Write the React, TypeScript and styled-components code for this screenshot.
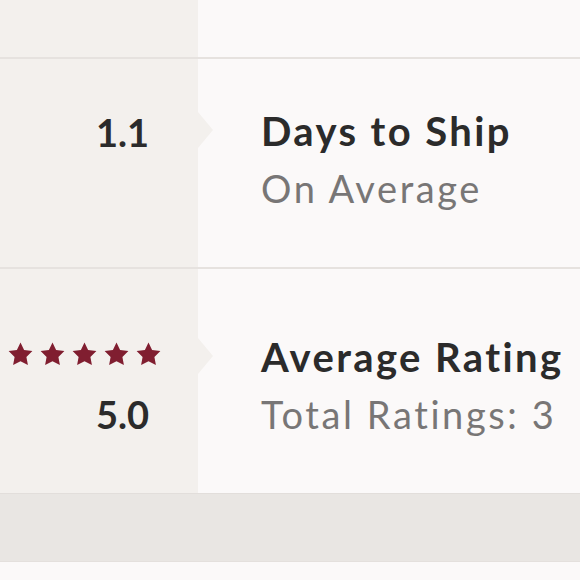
import styled, { createGlobalStyle } from "styled-components";

import type { FC } from "react";

const LEFT_WIDTH = 198;
const BEIGE = "#f3f0ed";
const PAPER = "#fbf9f9";
const RULE = "#e6e2df";

const GlobalStyle = createGlobalStyle`
    html, body {
        margin: 0;
        padding: 0;
        background: ${PAPER};
    }
    body {
        font-family: Lato, "Liberation Sans", sans-serif;
        -webkit-font-smoothing: antialiased;
    }
`;

const Page = styled.div`
    width: 580px;
    height: 580px;
    overflow: hidden;
    display: flex;
    flex-flow: column;
    background: ${PAPER};
`;

const Row = styled.section<{ $height: number; $rule?: boolean }>`
    display: flex;
    box-sizing: border-box;
    height: ${p => p.$height}px;
    flex-shrink: 0;
    border-bottom: ${p => (p.$rule ? `2px solid ${RULE}` : "none")};
`;

const Side = styled.div<{ $padTop: number; $notch?: number }>`
    position: relative;
    width: ${LEFT_WIDTH}px;
    flex-shrink: 0;
    background: ${BEIGE};
    box-sizing: border-box;
    padding: ${p => p.$padTop}px 49px 0 0;
    display: flex;
    flex-flow: column;
    align-items: flex-end;

    &::after {
        content: ${p => (p.$notch ? '""' : "none")};
        position: absolute;
        left: 100%;
        top: ${p => p.$notch ?? 0}px;
        border-top: 18px solid transparent;
        border-bottom: 18px solid transparent;
        border-left: 15px solid ${BEIGE};
    }
`;

const Main = styled.div<{ $padTop: number }>`
    flex: 1;
    background: ${PAPER};
    padding: ${p => p.$padTop}px 0 0 63px;
    display: flex;
    flex-flow: column;
`;

const Figure = styled.span`
    font-size: 38px;
    line-height: 57px;
    font-weight: 700;
    color: #2b2b2b;
`;

const Title = styled.span`
    font-size: 40px;
    line-height: 57px;
    font-weight: 700;
    color: #2b2b2b;
    letter-spacing: 2.4px;
    white-space: nowrap;
`;

const Caption = styled.span`
    font-size: 38px;
    line-height: 57px;
    font-weight: 400;
    color: #787676;
    letter-spacing: 2.6px;
    white-space: nowrap;
`;

const Stars = styled.div`
    display: flex;
    gap: 7px;
    box-sizing: border-box;
    height: 57px;
    padding-top: 13px;
    align-items: flex-start;
    margin-right: -12px;
`;

const Band = styled.div`
    height: 69px;
    box-sizing: border-box;
    flex-shrink: 0;
    background: #e9e6e3;
    border-top: 1px solid #e2dedb;
    border-bottom: 1px solid #e4e0dd;
`;

const Star: FC = () => (
    <svg width="25" height="24" viewBox="0 0 25 24">
        <path
            d="M12.5 0.5L16.1 8 24.4 9.1 18.4 14.9 19.9 23.1 12.5 19.2 5.1 23.1 6.6 14.9 0.6 9.1 8.9 8Z"
            fill="#801e30"
        />
    </svg>
);

export default function App() {
    return (
        <Page>
            <GlobalStyle />
            <Row $height={59} $rule>
                <Side $padTop={0} />
                <Main $padTop={0} />
            </Row>
            <Row $height={210} $rule>
                <Side $padTop={45} $notch={53}>
                    <Figure>1.1</Figure>
                </Side>
                <Main $padTop={44}>
                    <Title>Days to Ship</Title>
                    <Caption>On Average</Caption>
                </Main>
            </Row>
            <Row $height={224}>
                <Side $padTop={60} $notch={69}>
                    <Stars>
                        {[0, 1, 2, 3, 4].map(i => <Star key={i} />)}
                    </Stars>
                    <Figure>5.0</Figure>
                </Side>
                <Main $padTop={60}>
                    <Title>Average Rating</Title>
                    <Caption>Total Ratings: 3</Caption>
                </Main>
            </Row>
            <Band />
        </Page>
    );
}
